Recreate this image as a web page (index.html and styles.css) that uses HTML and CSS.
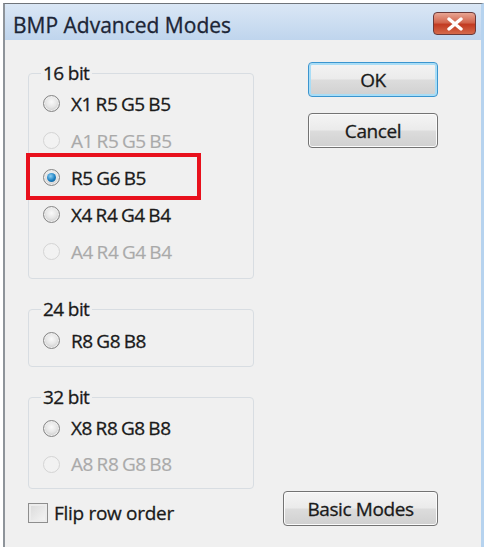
FILE: index.html
```html
<!DOCTYPE html>
<html lang="en">
<head>
  <meta charset="UTF-8">
  <title>BMP Advanced Modes</title>
  <link rel="stylesheet" href="styles.css">
</head>
<body>
  <div class="window">
    <div class="titlebar">
      <span class="title">BMP Advanced Modes</span>
      <button class="close-btn">
        <svg width="18" height="14" viewBox="0 0 18 14">
          <path d="M3 2 L15 12 M15 2 L3 12" stroke="#ffffff" stroke-width="3.4" stroke-linecap="round"/>
        </svg>
      </button>
    </div>
    <div class="client">
      <div class="top">
        <div class="groups">
          <fieldset class="group group-16">
            <legend>16 bit</legend>
            <div class="row"><span class="radio"></span>X1 R5 G5 B5</div>
            <div class="row disabled"><span class="radio"></span>A1 R5 G5 B5</div>
            <div class="row marked"><span class="radio checked"></span>R5 G6 B5</div>
            <div class="row"><span class="radio"></span>X4 R4 G4 B4</div>
            <div class="row disabled"><span class="radio"></span>A4 R4 G4 B4</div>
          </fieldset>
          <fieldset class="group group-24">
            <legend>24 bit</legend>
            <div class="row"><span class="radio"></span>R8 G8 B8</div>
          </fieldset>
          <fieldset class="group group-32">
            <legend>32 bit</legend>
            <div class="row short"><span class="radio"></span>X8 R8 G8 B8</div>
            <div class="row short disabled"><span class="radio"></span>A8 R8 G8 B8</div>
          </fieldset>
        </div>
        <div class="actions">
          <button class="btn btn-default">OK</button>
          <button class="btn">Cancel</button>
        </div>
      </div>
      <div class="bottom">
        <label class="check"><span class="box"></span>Flip row order</label>
        <button class="btn btn-wide">Basic Modes</button>
      </div>
    </div>
  </div>
</body>
</html>
```

FILE: styles.css
```css
body {
  margin: 0;
  background: #ffffff;
  font-family: 'Open Sans', 'Noto Sans', sans-serif;
}
.window {
  margin: 3px 0 0 3px;
  width: 476px;
  height: 544px;
  border-top: 1px solid #6f747a;
  border-left: 2px solid #8e949a;
  border-right: 3px solid #b6d3ef;
  background: #f0f0f0;
  display: flex;
  flex-direction: column;
}
.titlebar {
  height: 36px;
  flex: none;
  display: flex;
  align-items: flex-start;
  justify-content: space-between;
  padding: 0 5px 0 8px;
  background: linear-gradient(#dae7f5, #bfd5ed);
}
.title {
  font-size: 21px;
  line-height: 24px;
  margin-top: 9px;
  color: #1c2536;
  -webkit-text-stroke: 0.3px #1c2536;
}
.close-btn {
  width: 43px;
  height: 23px;
  margin-top: 8px;
  padding: 0;
  border: 1px solid #6a3a3a;
  border-radius: 4px;
  background: linear-gradient(#e8a593 0%, #d2674f 45%, #c23b22 55%, #d56a4b 100%);
  display: flex;
  align-items: center;
  justify-content: center;
}
.client {
  flex: 1;
  padding: 23px 43px 0 23px;
  display: flex;
  flex-direction: column;
}
.top {
  display: flex;
  justify-content: space-between;
}
.groups {
  width: 226px;
  display: flex;
  flex-direction: column;
  gap: 20px;
}
.group {
  margin: 0;
  padding: 2px 0 8px 0;
  border: 1px solid #d8dde2;
  border-radius: 4px;
  min-width: 0;
}
.group legend {
  margin-left: 12px;
  padding: 0 3px 0 2px;
  height: 20px;
  line-height: 20px;
  font-size: 19px;
  color: #1a1a1a;
  letter-spacing: -0.6px;
  -webkit-text-stroke: 0.3px #1a1a1a;
}
.group-24 {
  padding: 3px 0 7px 0;
}
.group-32 {
  padding: 3px 0 6px 0;
}
.row {
  height: 37px;
  display: flex;
  align-items: center;
  padding-left: 14px;
  font-size: 19px;
  color: #1a1a1a;
  letter-spacing: -0.4px;
  word-spacing: -1px;
  -webkit-text-stroke: 0.3px #1a1a1a;
  position: relative;
}
.row.short {
  height: 36px;
}
.row.disabled {
  color: #a9a9a9;
  -webkit-text-stroke: 0.2px #b4b4b4;
}
.marked::after {
  content: '';
  position: absolute;
  left: -3px;
  top: -6px;
  width: 167px;
  height: 39px;
  border: 4px solid #e8101c;
}
.radio {
  width: 15px;
  height: 15px;
  border: 1px solid #858585;
  border-radius: 50%;
  margin-right: 11px;
  background: radial-gradient(circle at 50% 40%, #fafafa 0%, #e6e6e6 45%, #b8b8b8 100%);
  box-shadow: inset 0 0 0 1px #efefef;
  position: relative;
}
.disabled .radio {
  border-color: #d4d4d4;
  background: #f2f2f2;
  box-shadow: none;
}
.radio.checked::after {
  content: '';
  position: absolute;
  left: 3px;
  top: 3px;
  width: 9px;
  height: 9px;
  border-radius: 50%;
  background: radial-gradient(circle at 40% 35%, #8ed0f5 0%, #1b7fc0 55%, #0e4e80 100%);
}
.actions {
  display: flex;
  flex-direction: column;
  gap: 16px;
  margin-top: -1px;
}
.btn {
  width: 130px;
  height: 35px;
  padding: 0;
  border: 1px solid #737373;
  border-radius: 4px;
  background: linear-gradient(#f4f4f4 0%, #ebebeb 48%, #dcdcdc 52%, #d0d0d0 100%);
  box-shadow: inset 0 0 0 1px #fbfbfb;
  font-family: 'Open Sans', 'Noto Sans', sans-serif;
  font-size: 19px;
  color: #1a1a1a;
  letter-spacing: -0.4px;
  -webkit-text-stroke: 0.3px #1a1a1a;
}
.btn-default {
  border-color: #3b95cf;
  box-shadow: inset 0 0 0 2px #a9ddf6;
}
.btn-wide {
  width: 155px;
}
.bottom {
  margin-top: 2px;
  display: flex;
  align-items: flex-end;
  justify-content: space-between;
}
.check {
  display: flex;
  align-items: center;
  font-size: 19px;
  color: #1a1a1a;
  letter-spacing: -0.3px;
  -webkit-text-stroke: 0.3px #1a1a1a;
}
.box {
  width: 18px;
  height: 18px;
  border: 1px solid #8e8e8e;
  margin-right: 6px;
  background: linear-gradient(135deg, #d9d9d9, #f6f6f6);
  box-shadow: inset 0 0 0 2px #ececec;
}
```
